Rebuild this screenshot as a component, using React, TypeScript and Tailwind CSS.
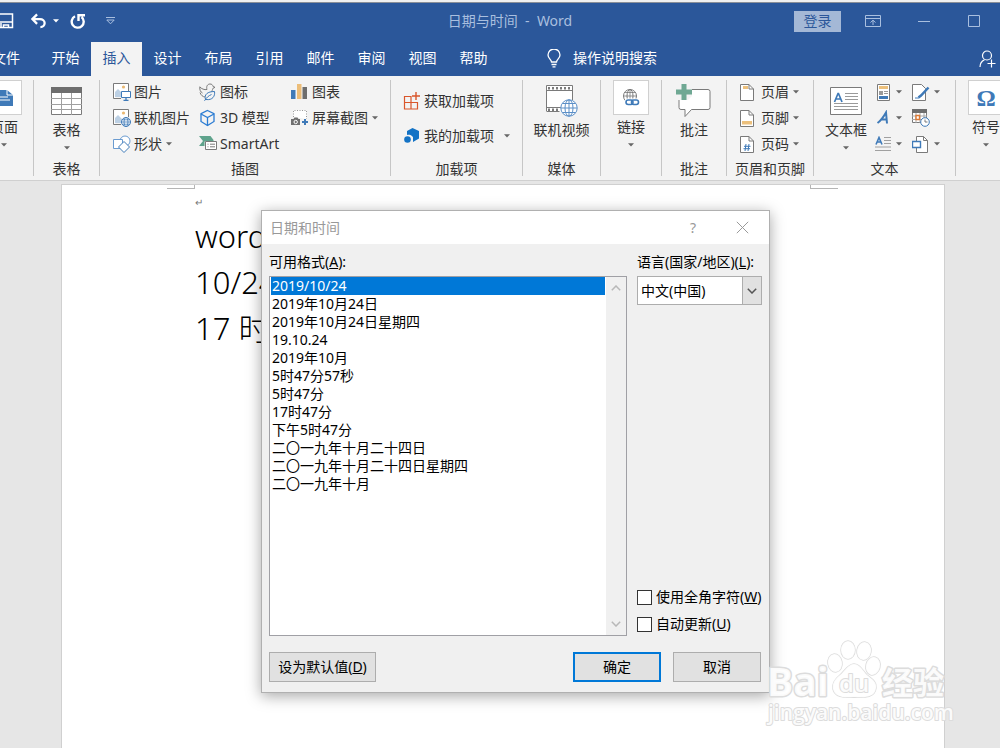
import { useState, type ReactNode } from 'react'

const tabs = ['开始', '插入', '设计', '布局', '引用', '邮件', '审阅', '视图', '帮助']

const formats = [
  '2019/10/24',
  '2019年10月24日',
  '2019年10月24日星期四',
  '19.10.24',
  '2019年10月',
  '5时47分57秒',
  '5时47分',
  '17时47分',
  '下午5时47分',
  '二〇一九年十月二十四日',
  '二〇一九年十月二十四日星期四',
  '二〇一九年十月'
]

const blue = '#3f7ab8'
const gray = '#7a7a7a'
const amber = '#ecc07c'

function Caret() {
  return (
    <svg width="6" height="4" viewBox="0 0 6 4" className="shrink-0" aria-hidden="true">
      <path d="M0 .3h6L3 3.6z" fill="#666" />
    </svg>
  )
}

function Svg({ w = 18, h = 18, children }: { w?: number; h?: number; children: ReactNode }) {
  return (
    <svg width={w} height={h} viewBox={`0 0 ${w} ${h}`} fill="none" className="shrink-0" aria-hidden="true">
      {children}
    </svg>
  )
}

/* ---------- ribbon icons ---------- */

function PictureBase() {
  return (
    <>
      <path d="M.5 15.500V.5h15V8" stroke={gray} fill="#fff" />
      <path d="M.5 15.500H8" stroke={gray} />
      <path d="M2 14V9l3-3 4 4v4z" fill="#bcd0e4" />
      <circle cx="10.500" cy="4" r="1.600" fill="#e9b872" />
    </>
  )
}

function PictureIcon() {
  return (
    <Svg>
      <PictureBase />
      <path d="M8.500 8.500h9v6h-9z" fill="#fff" stroke={blue} />
      <path d="M13 15v2M10.500 17.500h5" stroke={blue} strokeWidth="1.300" />
    </Svg>
  )
}

function OnlinePictureIcon() {
  return (
    <Svg>
      <PictureBase />
      <circle cx="13" cy="13" r="4.500" fill="#fff" stroke={blue} />
      <ellipse cx="13" cy="13" rx="2" ry="4.500" stroke={blue} strokeWidth=".8" />
      <path d="M8.500 13h9M9.300 10.800h7.400M9.300 15.200h7.400" stroke={blue} strokeWidth=".8" />
    </Svg>
  )
}

function ShapesIcon() {
  return (
    <Svg>
      <circle cx="12" cy="6" r="5" fill="#fff" stroke="#6a9bd0" />
      <path d="M.5 4.500h9v9h-9z" fill="#fff" stroke="#6a9bd0" />
      <path d="M11 6.500l5.500 5.500-5.500 5.500L5.500 12z" fill="#fff" stroke={blue} />
    </Svg>
  )
}

function BirdIcon() {
  return (
    <Svg>
      <path
        d="M8 6.500C7 3.500 8.500 1 11 1c1.800 0 2.800 1 3 2.500l2 .8-2.200 1.200c-.3 1.500-.8 2.500-1.300 3M8 6.500C5.500 7 2.500 6 .8 3.800.5 7 1.500 9 3.500 10M1 9.500c1 2.800 2.800 4.300 5 4.500"
        stroke={gray}
      />
      <path d="M6.500 16.500c-1.500-5 2-8 9-8 .8 4.500-2 9-8.500 8zM5.500 17.800c2-3.300 4-5 7-6.300" stroke={blue} />
    </Svg>
  )
}

function CubeIcon() {
  return (
    <Svg>
      <path d="M8.500 1.500l6.500 3.200v7.800L8.500 16.500 2 12.500V4.700z" stroke="#2b7cd3" strokeWidth="1.300" />
      <path d="M2 5l6.500 3.500L15 5M8.500 8.500v8" stroke="#2b7cd3" strokeWidth="1.300" />
    </Svg>
  )
}

function SmartArtIcon() {
  return (
    <Svg>
      <path d="M0 1h11.500l3 4v1.500H5.500V11H0l4-5z" fill="#5fa38c" />
      <path d="M6.500 6.500h11v8h-11z" fill="#fff" stroke={gray} />
      <path d="M8.500 9.200h1M11 9.200h5M8.500 11.800h1M11 11.800h5" stroke={gray} />
    </Svg>
  )
}

function ChartIcon() {
  return (
    <Svg>
      <path d="M0 7h4.500v9H0z" fill={blue} />
      <path d="M6 1h4.500v15H6z" fill="#ecbd78" />
      <path d="M11.500 4H16v12h-4.500z" fill="#6e6e6e" />
    </Svg>
  )
}

function ScreenshotIcon() {
  return (
    <Svg>
      <path d="M2.500 8V1.500h13V10" fill="#fff" stroke="#9a9a9a" strokeDasharray="1 1.500" />
      <path d="M0 10h2.500l1-1.500h3l1 1.500H9v6H0z" fill="#707070" />
      <circle cx="4.700" cy="13" r="1.700" stroke="#fff" />
      <path d="M14 10v6M11 13h6" stroke={blue} strokeWidth="2" />
    </Svg>
  )
}

function GetAddinsIcon() {
  return (
    <Svg>
      <path d="M1.500 4.500H8V17H1.500zM1.500 10.500h13V17H8M8 4.500v6" stroke="#d9562b" strokeWidth="1.200" />
      <path d="M13 0v8M9 4h8" stroke="#d9562b" strokeWidth="1.400" />
    </Svg>
  )
}

function MyAddinsIcon() {
  return (
    <Svg>
      <path d="M9.500 1l6.500 3v7.500L10 15V10C8 7.500 6 7.500 4 8V4z" fill="#1473c5" />
      <circle cx="4.500" cy="12.500" r="3.300" fill="#1473c5" />
    </Svg>
  )
}

function TableIcon() {
  return (
    <Svg w={31} h={28}>
      <path d="M.5.5h30v27H.5z" fill="#fff" stroke={gray} />
      <path d="M0 0h31v6H0z" fill="#6e6e6e" />
      <path d="M10.500 6v22M20.500 6v22M0 11.500h31M0 17.500h31M0 22.500h31" stroke="#a0a0a0" />
    </Svg>
  )
}

function VideoIcon() {
  return (
    <Svg w={32} h={32}>
      <path d="M.5.5h26v26H.5z" fill="#fff" />
      <path d="M.5 26V.5h26V15M.5 26.500h13M0 5.500h27M0 22.500h15" stroke={gray} />
      <path d="M2 3.200h24" stroke={gray} strokeWidth="2.500" strokeDasharray="2 2" />
      <path d="M2 24.700h12" stroke={gray} strokeWidth="2.500" strokeDasharray="2 2" />
      <circle cx="23" cy="23" r="8.200" fill="#fff" stroke="#5b8fc7" />
      <ellipse cx="23" cy="23" rx="4" ry="8.200" stroke="#5b8fc7" />
      <path d="M23 15v16M15 23h16M16.500 18.500h13M16.500 27.500h13" stroke="#5b8fc7" />
    </Svg>
  )
}

function LinkIcon() {
  return (
    <Svg w={18} h={20}>
      <circle cx="8" cy="8" r="6.500" stroke={gray} />
      <ellipse cx="8" cy="8" rx="3" ry="6.500" stroke={gray} />
      <path d="M8 1.500v13M1.500 8h13M2.500 4.500h11M2.500 11.500h11" stroke={gray} strokeWidth=".8" />
      <path d="M3 10.500h15v7H3z" fill="#fff" />
      <rect x="4" y="12" width="7" height="4.500" rx="2.200" stroke={blue} strokeWidth="1.600" />
      <rect x="9.500" y="12" width="7" height="4.500" rx="2.200" stroke={blue} strokeWidth="1.600" />
    </Svg>
  )
}

function CommentIcon() {
  return (
    <Svg w={36} h={34}>
      <path
        d="M5 5.500h27a2 2 0 0 1 2 2v16a2 2 0 0 1-2 2H15.500L9 32.500v-7H5a2 2 0 0 1-2-2v-16a2 2 0 0 1 2-2z"
        fill="#fff"
        stroke={gray}
      />
      <path d="M0 0h16v12l-4 4H0z" fill="#f3f3f3" />
      <path d="M5.500 0h5v5.500H16v5h-5.500V16h-5v-5.500H0v-5h5.500z" fill="#6fa893" />
    </Svg>
  )
}

function PageIcon({ children }: { children: ReactNode }) {
  return (
    <Svg w={14} h={17}>
      <path d="M.5.5h8.500l4.500 4.500v11.500H.5z" fill="#fff" stroke={gray} />
      <path d="M9 .5V5h4.500" stroke={gray} />
      {children}
    </Svg>
  )
}

function TextBoxIcon() {
  return (
    <Svg w={32} h={28}>
      <path d="M.5.5h31v27H.5z" fill="#fff" stroke={gray} />
      <path d="M4.500 15L8 6.500h.5L12 15M5.800 12h5" stroke={blue} strokeWidth="1.700" />
      <path d="M15 6.500h13M15 9.500h13M15 12.500h13M4 16.500h24M4 19.500h24M4 22.500h24" stroke="#9a9a9a" />
    </Svg>
  )
}

function QuickPartsIcon() {
  return (
    <Svg w={13} h={17}>
      <path d="M.5.5h12v16H.5z" fill="#fff" stroke={gray} />
      <path d="M2 2h9v3H2z" fill={amber} />
      <path d="M2 7h4v4H2z" fill="#9a9a9a" />
      <path d="M7 7.500h4M7 9.500h4" stroke="#9a9a9a" />
      <path d="M2 12h9v3H2z" fill={blue} />
    </Svg>
  )
}

function WordArtIcon() {
  return (
    <Svg w={14} h={16}>
      <path d="M1.500 13C4.500 11 8 6 10 2.500l1 11M4.500 9.500h6.500" stroke={blue} strokeWidth="2" />
    </Svg>
  )
}

function DropCapIcon() {
  return (
    <Svg w={16} h={17}>
      <path d="M1 8.500L4 1.500l3 7M2 6h4" stroke={blue} strokeWidth="1.600" />
      <path d="M9 1.500h7M9 4.500h7M9 7.500h7M0 11h16M0 14.500h16" stroke="#a0a0a0" />
    </Svg>
  )
}

function SignatureIcon() {
  return (
    <Svg w={18} h={17}>
      <path d="M.5.5h9l4 4v12H.5z" fill="#fff" stroke={gray} />
      <path d="M16.500 3.500L9 11.500l-2.500 2" stroke={blue} strokeWidth="2.500" />
      <path d="M3 14h4" stroke={blue} />
    </Svg>
  )
}

function DateTimeIcon() {
  return (
    <Svg w={18} h={18}>
      <path d="M.5.5h14v13H.5z" fill="#fff" stroke={gray} />
      <path d="M0 0h15v4H0z" fill="#6e6e6e" />
      <path d="M4 4v10M8 4v10M12 4v5M0 7h15M0 10.500h10" stroke="#a8a8a8" />
      <path d="M4 6.500h3.500v4H4z" fill="#fff" stroke="#dd7a35" strokeWidth="1.400" />
      <circle cx="13" cy="13" r="4.300" fill="#fff" stroke={blue} />
      <path d="M13 10.500V13h2.500" stroke={gray} />
    </Svg>
  )
}

function ObjectIcon() {
  return (
    <Svg w={18} h={17}>
      <path d="M4.500.5h7L15.500 4.500v12h-11z" fill="#fff" stroke={gray} />
      <path d="M11.500.5v4h4" stroke={gray} />
      <path d="M.5 5.500h8v6h-8z" fill="#fff" stroke={blue} strokeWidth="1.400" />
    </Svg>
  )
}

/* ---------- ribbon parts ---------- */

function Group({ label, className, children }: { label?: string; className: string; children: ReactNode }) {
  return (
    <section className={`flex h-24 shrink-0 flex-col border-r border-[#c6c6c6] ${className}`}>
      <div className="flex h-[83px]">{children}</div>
      {label && <div className="text-center leading-none whitespace-nowrap">{label}</div>}
    </section>
  )
}

function SmallButton({ icon, label, caret }: { icon: ReactNode; label: string; caret?: boolean }) {
  return (
    <button className="flex h-6 items-center gap-1 whitespace-nowrap">
      <span className="flex w-[17px] shrink-0">{icon}</span>
      {label}
      {caret && <Caret />}
    </button>
  )
}

function BigButton({ icon, label, caret, boxed }: { icon: ReactNode; label: string; caret?: boolean; boxed?: boolean }) {
  return (
    <button className="flex w-full flex-col items-center whitespace-nowrap">
      {boxed ? (
        <span className="flex h-[35px] w-[36px] items-center justify-center border border-[#d0d0d0] bg-white">
          {icon}
        </span>
      ) : (
        <span className="flex h-[38px] items-center justify-center pt-1">{icon}</span>
      )}
      <span className="mt-0.5 mb-1.5 leading-5">{label}</span>
      {caret && <Caret />}
    </button>
  )
}

function IconButton({ icon, name, caret = true }: { icon: ReactNode; name: string; caret?: boolean }) {
  return (
    <button aria-label={name} className="flex h-6 items-center gap-1">
      <span className="flex w-[18px] justify-center">{icon}</span>
      {caret && <Caret />}
    </button>
  )
}

function TitleBar() {
  return (
    <div className="flex h-9 items-center text-[#a9bfdf]">
      <div className="flex flex-1 items-center">
        <button aria-label="保存" className="-ml-1">
          <svg width="18" height="16" viewBox="0 0 18 16" fill="none" stroke="#fff" strokeWidth="1.500">
            <path d="M1 1h15.500v13.500H1zM1 9h15.500M5 14v-4M7.500 14.500V12h5v2.500" />
          </svg>
        </button>
        <button aria-label="撤消" className="ml-4 flex items-center gap-1.5">
          <svg width="17" height="16" viewBox="0 0 18 16" fill="none" stroke="#fff" strokeWidth="2.400">
            <path d="M7.500 1L2.500 6l5 5M3 6h7.500c3 0 5 1.800 5 4.200S13.500 14.500 11 14.500" />
          </svg>
          <svg width="6" height="4" viewBox="0 0 6 4" fill="#fff">
            <path d="M0 .3h6L3 3.600z" />
          </svg>
        </button>
        <button aria-label="重复" className="ml-2.5">
          <svg width="17" height="16" viewBox="0 0 17 16" fill="none" stroke="#fff" strokeWidth="2.400">
            <path d="M6 3.300A6 6 0 1 0 12.500 4M9.500 8V2.300H16" />
          </svg>
        </button>
        <button aria-label="自定义快速访问工具栏" className="ml-5">
          <svg width="9" height="8" viewBox="0 0 9 8" fill="none" stroke="#a9bfdf">
            <path d="M0 .5h9M.8 3h7.400L4.500 6.800z" />
          </svg>
        </button>
      </div>
      <h1 className="ml-10 whitespace-pre">日期与时间  -  Word</h1>
      <div className="flex flex-1 items-center justify-end pr-5">
        <button className="h-[21px] w-[47px] bg-[#a4b8d6] leading-5 text-[#2b579a]">登录</button>
        <button aria-label="功能区显示选项" className="ml-6">
          <svg width="17" height="13" viewBox="0 0 17 13" fill="none" stroke="currentColor">
            <path d="M.5.5h15v11H.5zM.5 3.500h15M8 10V5.500M5.500 7.500L8 5.200l2.500 2.300" />
          </svg>
        </button>
        <button aria-label="最小化" className="ml-9">
          <svg width="12" height="12" viewBox="0 0 12 12" stroke="currentColor">
            <path d="M0 6.500h12" />
          </svg>
        </button>
        <button aria-label="最大化" className="ml-[38px]">
          <svg width="12" height="12" viewBox="0 0 12 12" fill="none" stroke="currentColor">
            <path d="M.5.5h11v11H.5z" />
          </svg>
        </button>
      </div>
    </div>
  )
}

function TabStrip({ active, onSelect }: { active: string; onSelect: (tab: string) => void }) {
  return (
    <nav className="flex h-[34px] items-stretch leading-5 text-white">
      <button className="-ml-2 w-12 pb-0.5 text-left">文件</button>
      {tabs.map((tab) => (
        <button
          key={tab}
          onClick={() => onSelect(tab)}
          className={`w-[51px] pb-0.5 ${tab === active ? 'bg-[#f3f3f3] text-[#2b579a]' : ''}`}
        >
          {tab}
        </button>
      ))}
      <button className="ml-12 flex items-center gap-3 pb-0.5">
        <svg width="14" height="19" viewBox="0 0 14 19" fill="none" stroke="#fff" strokeWidth="1.300">
          <path d="M4.500 13c0-2.500-3.500-3.500-3.500-7a6 6 0 0 1 12 0c0 3.500-3.500 4.500-3.500 7zM4.500 15.500h5M5.500 17.800h3" />
        </svg>
        操作说明搜索
      </button>
      <button aria-label="共享" className="mr-1 ml-auto">
        <svg width="17" height="18" viewBox="0 0 17 18" fill="none" stroke="#fff" strokeWidth="1.200">
          <circle cx="8" cy="5.500" r="4.500" />
          <path d="M1 17c0-4 2-6 4.500-7.200M12.500 9.500v8M8.500 13.500h8" />
        </svg>
      </button>
    </nav>
  )
}

function Ribbon() {
  return (
    <div className="flex h-[105px] overflow-hidden border-b border-[#d0d0d0] bg-[#f3f3f3] pt-1 text-[#333]">
      <Group className="w-[34px] overflow-hidden">
        <div className="-ml-[14px] w-9">
          <BigButton
            boxed
            caret
            label="页面"
            icon={
              <Svg w={22} h={20}>
                <path d="M1 2h13l6 5v11H1z" fill={blue} />
                <path d="M14 2v5h6M5 9h10M5 12h12" stroke="#fff" />
              </Svg>
            }
          />
        </div>
      </Group>
      <Group label="表格" className="w-[66px]">
        <BigButton caret label="表格" icon={<TableIcon />} />
      </Group>
      <Group label="插图" className="w-[291px]">
        <div className="ml-[13px] flex w-[86px] flex-col gap-0.5">
          <SmallButton icon={<PictureIcon />} label="图片" />
          <SmallButton icon={<OnlinePictureIcon />} label="联机图片" />
          <SmallButton icon={<ShapesIcon />} label="形状" caret />
        </div>
        <div className="flex w-[92px] flex-col gap-0.5">
          <SmallButton icon={<BirdIcon />} label="图标" />
          <SmallButton icon={<CubeIcon />} label="3D 模型" />
          <SmallButton icon={<SmartArtIcon />} label="SmartArt" />
        </div>
        <div className="flex flex-col gap-0.5">
          <SmallButton icon={<ChartIcon />} label="图表" />
          <SmallButton icon={<ScreenshotIcon />} label="屏幕截图" caret />
        </div>
      </Group>
      <Group label="加载项" className="w-[132px]">
        <div className="flex flex-1 flex-col gap-[11px] px-3 pt-[9px]">
          <SmallButton icon={<GetAddinsIcon />} label="获取加载项" />
          <button className="flex h-6 items-center gap-1 whitespace-nowrap">
            <span className="flex w-[17px]">
              <MyAddinsIcon />
            </span>
            我的加载项
            <span className="ml-auto">
              <Caret />
            </span>
          </button>
        </div>
      </Group>
      <Group label="媒体" className="w-[78px]">
        <BigButton label="联机视频" icon={<VideoIcon />} />
      </Group>
      <Group className="w-[61px]">
        <BigButton boxed caret label="链接" icon={<LinkIcon />} />
      </Group>
      <Group label="批注" className="w-[65px]">
        <BigButton label="批注" icon={<CommentIcon />} />
      </Group>
      <Group label="页眉和页脚" className="w-[87px]">
        <div className="flex flex-col gap-0.5 pl-[13px]">
          <SmallButton
            label="页眉"
            caret
            icon={
              <PageIcon>
                <path d="M3 2h5v3H3z" fill={amber} />
              </PageIcon>
            }
          />
          <SmallButton
            label="页脚"
            caret
            icon={
              <PageIcon>
                <path d="M2 11h10v3.500H2z" fill={amber} />
              </PageIcon>
            }
          />
          <SmallButton
            label="页码"
            caret
            icon={
              <PageIcon>
                <path d="M6 8l-1 7M9 8l-1 7M4 10.300h6.500M3.500 12.700H10" stroke={blue} />
              </PageIcon>
            }
          />
        </div>
      </Group>
      <Group label="文本" className="w-[142px]">
        <div className="w-16">
          <BigButton caret label="文本框" icon={<TextBoxIcon />} />
        </div>
        <div className="-ml-1 flex w-[38px] flex-col gap-0.5">
          <IconButton name="文档部件" icon={<QuickPartsIcon />} />
          <IconButton name="艺术字" icon={<WordArtIcon />} />
          <IconButton name="首字下沉" icon={<DropCapIcon />} />
        </div>
        <div className="flex flex-col gap-0.5">
          <IconButton name="签名行" icon={<SignatureIcon />} />
          <IconButton name="日期和时间" icon={<DateTimeIcon />} caret={false} />
          <IconButton name="对象" icon={<ObjectIcon />} />
        </div>
      </Group>
      <section className="ml-3 w-9 shrink-0">
        <BigButton
          boxed
          caret
          label="符号"
          icon={<span className="font-['Liberation_Serif',serif] text-2xl font-bold text-[#3f7ab8]">Ω</span>}
        />
      </section>
    </div>
  )
}

function DocumentPage() {
  return (
    <main className="mt-[3px] mr-[55px] ml-[61px] flex-1 border border-b-0 border-[#d0d0d0] bg-white text-black">
      <div className="mr-[106px] ml-[105px] flex justify-between">
        <div className="h-1 w-7 border-r border-b border-[#b5b5b5]" />
        <div className="h-1 w-7 border-b border-l border-[#b5b5b5]" />
      </div>
      <div className="pl-[133px]">
        <div className="h-6 pt-1.5 text-[10px] text-[#777]">↵</div>
        <div className="text-[31px] leading-[46px] font-light">
          <p>word</p>
          <p>10/24</p>
          <p>17 时</p>
        </div>
      </div>
    </main>
  )
}

function Chevron({ up, color }: { up?: boolean; color: string }) {
  return (
    <svg width="10" height="6" viewBox="0 0 10 6" fill="none" stroke={color} strokeWidth="1.500" aria-hidden="true">
      <path d={up ? 'M.8 5.200L5 1l4.200 4.200' : 'M.8.8L5 5 9.200.8'} />
    </svg>
  )
}

function DateTimeDialog() {
  const [selected, setSelected] = useState(0)

  return (
    <div
      role="dialog"
      aria-labelledby="dialog-title"
      className="absolute top-[210px] left-[261px] w-[509px] border border-[#b0b0b0] bg-[#f0f0f0] text-black shadow-[0_3px_14px_rgba(0,0,0,0.35)]"
    >
      <header className="flex h-[33px] items-center bg-white pr-5 pl-2 text-[#999]">
        <h2 id="dialog-title" className="flex-1">
          日期和时间
        </h2>
        <button aria-label="帮助">?</button>
        <button aria-label="关闭" className="ml-10">
          <svg width="13" height="13" viewBox="0 0 13 13" stroke="#999">
            <path d="M.8.8l11.400 11.400M12.200.8L.8 12.200" />
          </svg>
        </button>
      </header>

      <div className="flex gap-2.5 px-[7px] pt-2">
        <div className="w-[358px]">
          <div id="format-label" className="h-6 leading-5">
            可用格式(<u>A</u>):
          </div>
          <div className="flex h-[360px] border border-[#a0a0a5] bg-white">
            <ul role="listbox" aria-labelledby="format-label" className="flex-1 px-px">
              {formats.map((format, i) => (
                <li
                  key={format}
                  role="option"
                  aria-selected={i === selected}
                  onClick={() => setSelected(i)}
                  className={`h-[18px] pl-px leading-[18px] ${i === selected ? 'bg-[#0078d7] text-white' : ''}`}
                >
                  {format}
                </li>
              ))}
            </ul>
            <div className="flex w-5 flex-col items-center justify-between bg-[#f0f0f0] py-2">
              <Chevron up color="#b8b8b8" />
              <Chevron color="#b8b8b8" />
            </div>
          </div>
        </div>

        <div className="flex flex-1 flex-col">
          <label htmlFor="language" className="h-6 leading-5 whitespace-nowrap">
            语言(国家/地区)(<u>L</u>):
          </label>
          <div className="relative h-[29px] w-[125px]">
            <select
              id="language"
              className="h-full w-full appearance-none border border-[#adadad] bg-white pl-[3px]"
            >
              <option>中文(中国)</option>
              <option>英语(美国)</option>
            </select>
            <span className="pointer-events-none absolute inset-y-0 right-0 flex w-5 items-center justify-center border border-[#adadad] bg-[#e1e1e1]">
              <Chevron color="#555" />
            </span>
          </div>
          <div className="mt-auto mb-0.5 flex flex-col gap-[7px] whitespace-nowrap">
            <label className="flex h-5 items-center gap-1">
              <input type="checkbox" className="size-[15px] appearance-none border border-[#333] bg-white checked:bg-[#0078d7]" />
              <span>
                使用全角字符(<u>W</u>)
              </span>
            </label>
            <label className="flex h-5 items-center gap-1">
              <input type="checkbox" className="size-[15px] appearance-none border border-[#333] bg-white checked:bg-[#0078d7]" />
              <span>
                自动更新(<u>U</u>)
              </span>
            </label>
          </div>
        </div>
      </div>

      <footer className="flex gap-3 pt-4 pr-2 pb-2.5 pl-[7px]">
        <button className="mr-auto h-[30px] w-[107px] border border-[#adadad] bg-[#e1e1e1]">
          设为默认值(<u>D</u>)
        </button>
        <button className="h-[30px] w-[88px] border-2 border-[#0078d7] bg-[#e1e1e1]">确定</button>
        <button className="h-[30px] w-[88px] border border-[#adadad] bg-[#e1e1e1]">取消</button>
      </footer>
    </div>
  )
}

function Watermark() {
  return (
    <svg
      width="190"
      height="92"
      viewBox="0 0 190 92"
      className="pointer-events-none absolute top-[638px] left-[765px] font-['Open_Sans','Noto_Sans_CJK_SC',sans-serif]"
      fill="#fff"
      fillOpacity=".9"
      stroke="#dcdcdc"
      strokeWidth="1.500"
      strokeLinejoin="round"
      paintOrder="stroke"
    >
      <text x="2" y="58" fontSize="39" fontWeight="700" strokeWidth="3">Bai</text>
      <ellipse cx="70" cy="25" rx="7" ry="9" transform="rotate(-10 70 25)" />
      <ellipse cx="83" cy="12" rx="7" ry="9" />
      <ellipse cx="99" cy="13" rx="7" ry="9" transform="rotate(10 99 13)" />
      <ellipse cx="108" cy="28" rx="7" ry="9" transform="rotate(15 108 28)" />
      <path d="M89 26c-6 0-9 7-14 11-6 5-8 9-7 14 2 8 10 9 21 8 12 1 21 0 22-9 1-6-4-9-9-13-4-4-7-11-13-11z" />
      <text x="74" y="54" fontSize="24" fontWeight="600" strokeWidth="2">du</text>
      <text x="117" y="56" fontSize="31" fontWeight="700" strokeWidth="3">经验</text>
      <text x="3" y="82" fontSize="21" fontWeight="600" strokeWidth="2">jingyan.baidu.com</text>
    </svg>
  )
}

export default function App() {
  const [activeTab, setActiveTab] = useState('插入')

  return (
    <div className="relative flex min-h-screen flex-col overflow-hidden bg-[#e6e6e6] font-['Noto_Sans','Noto_Sans_CJK_SC',sans-serif] text-sm">
      <div className="h-[3px] border-b border-[#8a8f98] bg-[#f0f0f0]" />
      <header className="bg-[#2b579a]">
        <TitleBar />
        <div className="pt-[3px]">
          <TabStrip active={activeTab} onSelect={setActiveTab} />
        </div>
      </header>
      <Ribbon />
      <DocumentPage />
      <DateTimeDialog />
      <Watermark />
    </div>
  )
}
